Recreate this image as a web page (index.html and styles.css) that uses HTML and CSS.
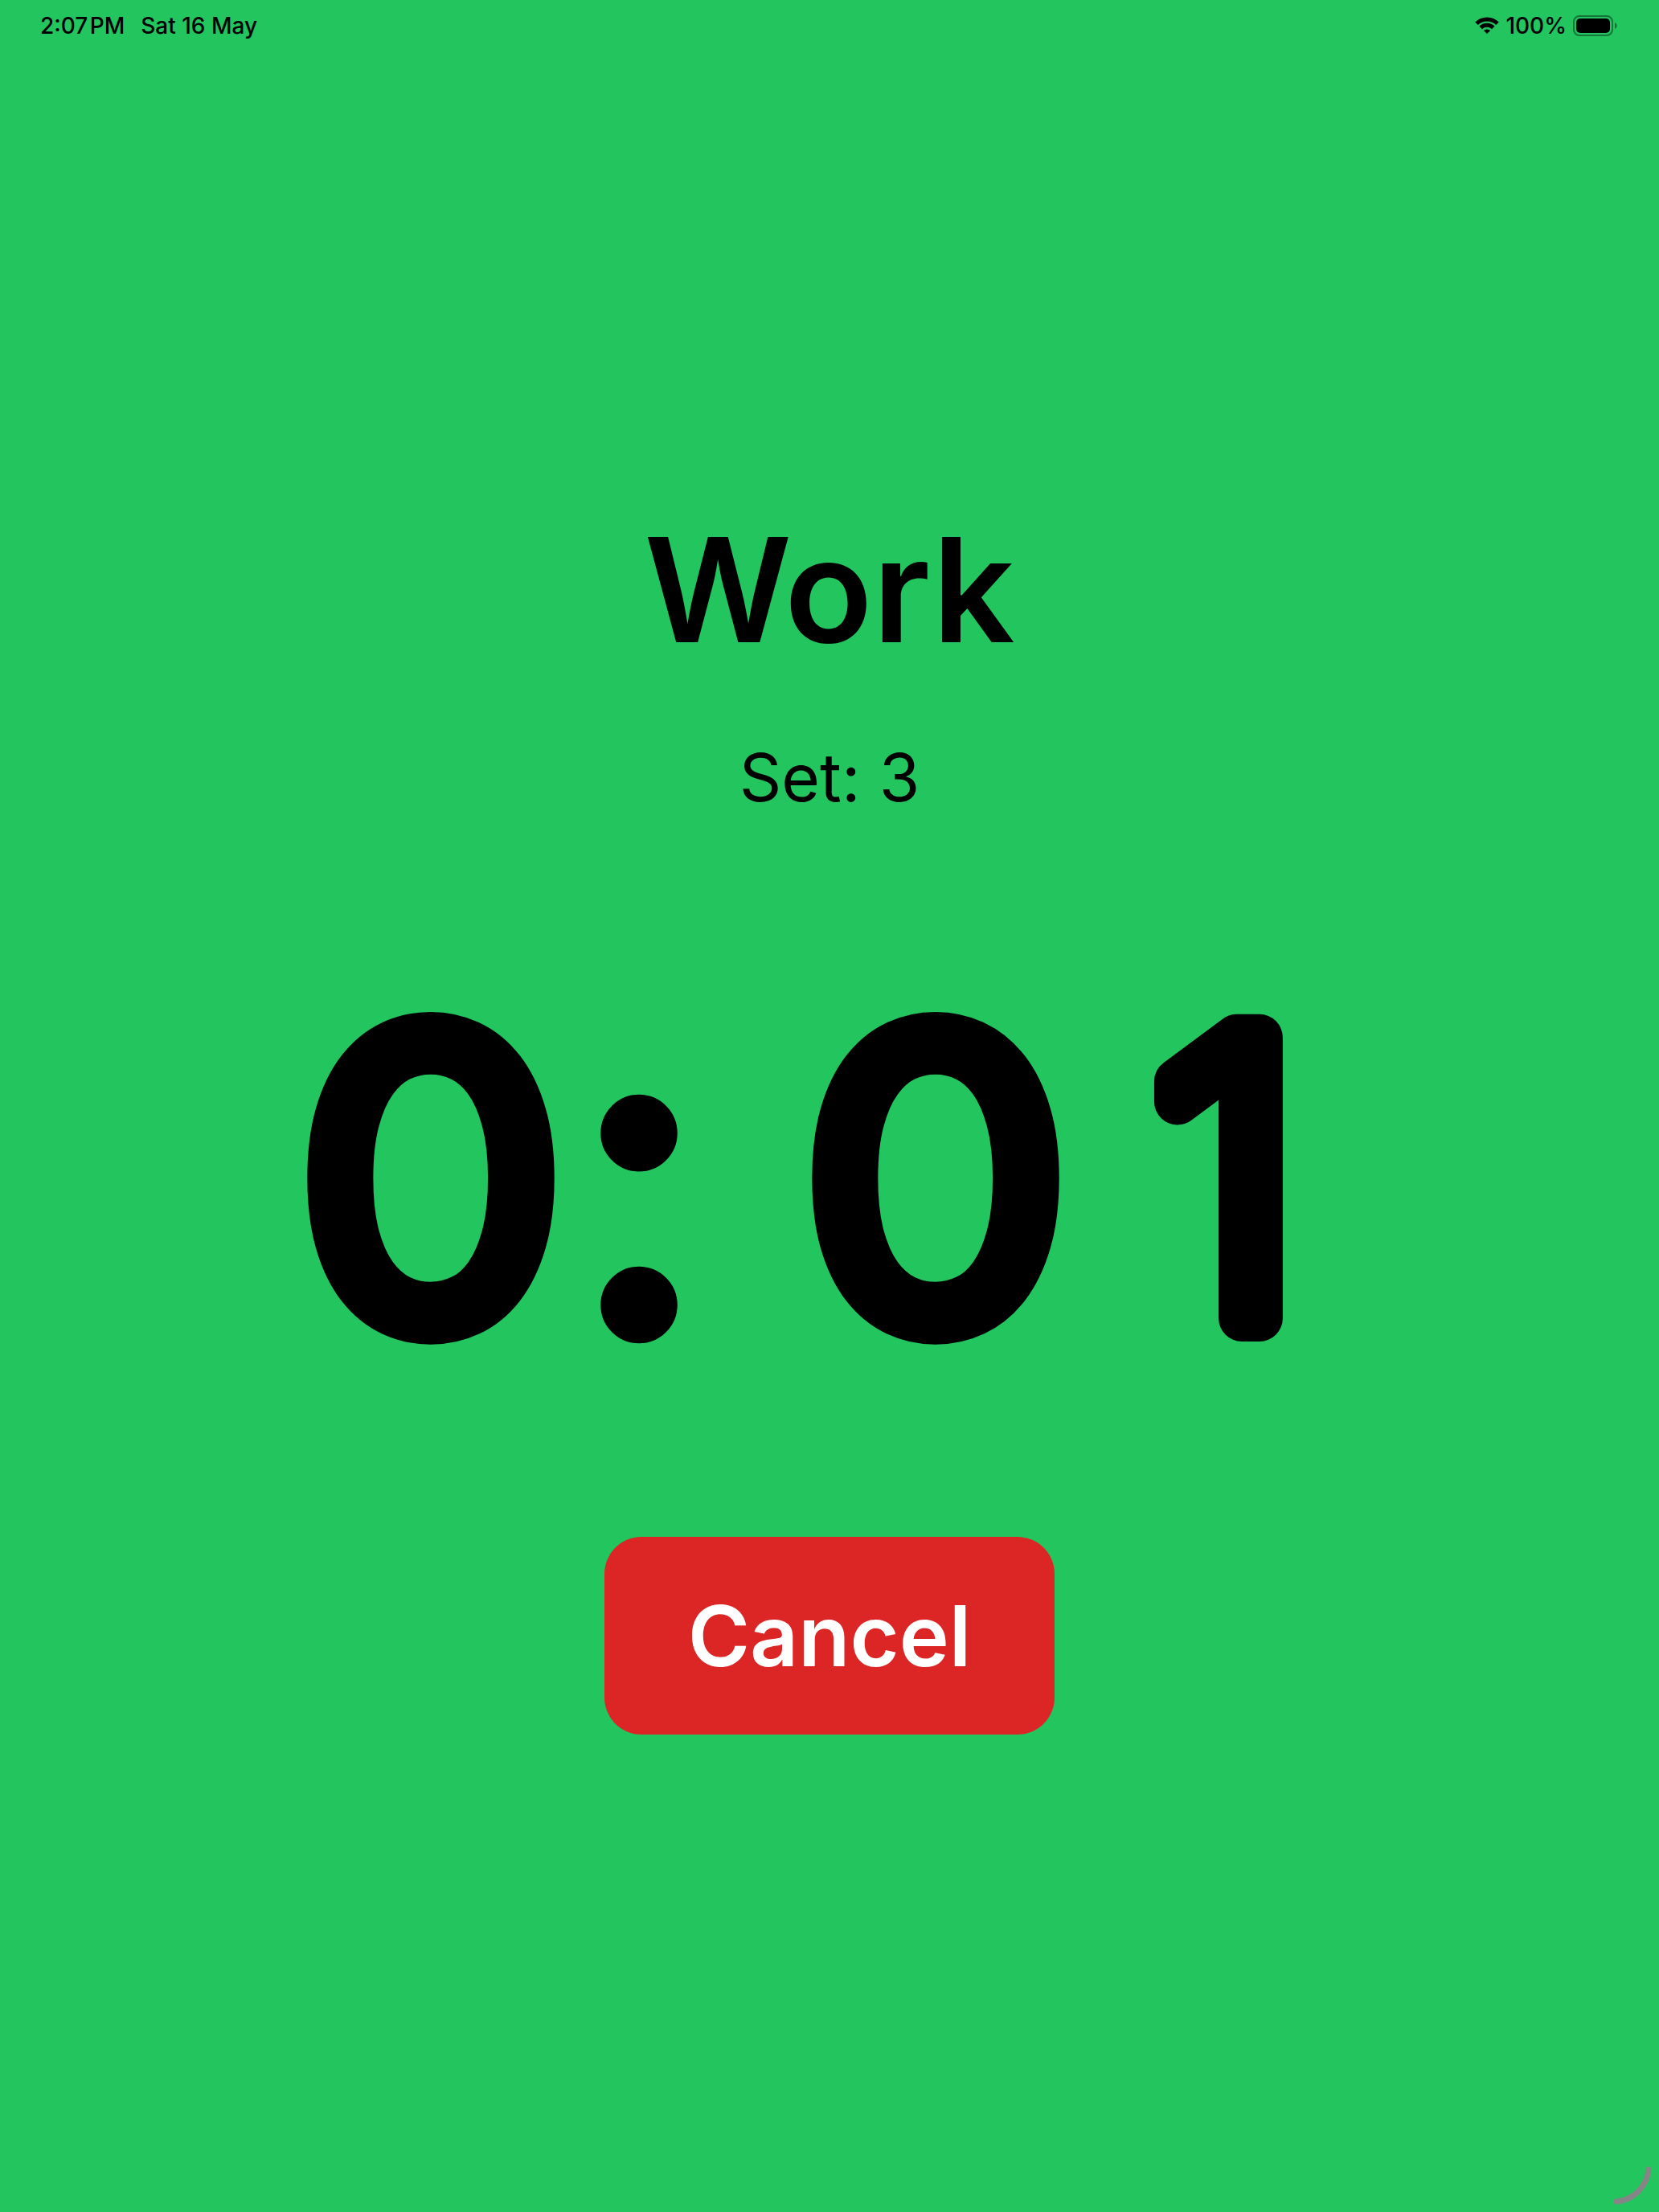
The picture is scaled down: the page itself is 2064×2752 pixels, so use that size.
FILE: index.html
```html
<!DOCTYPE html>
<html lang="en">
<head>
<meta charset="utf-8">
<meta name="viewport" content="width=device-width, initial-scale=1">
<title>Interval Timer</title>
<link rel="stylesheet" href="styles.css">
</head>
<body>
<div class="screen">
  <header class="status">
    <div class="status-left"><span class="clock">2:07&#8202;PM</span><span>Sat 16 May</span></div>
    <div class="status-right">
      <svg class="wifi" viewBox="0 0 30 22" aria-hidden="true">
        <path class="wave" d="M2 8.2A18.6 18.6 0 0 1 28 8.2M7.2 13.4A11.2 11.2 0 0 1 22.8 13.4"/>
        <path d="M15 21L10.9 17A6 6 0 0 1 19.1 17Z"/>
      </svg>
      <span>100%</span>
      <svg class="battery" viewBox="0 0 55 26" aria-hidden="true">
        <rect class="shell" x="1" y="1" width="48" height="24" rx="7"/>
        <rect x="4" y="4" width="42" height="18" rx="5"/>
        <path class="nub" d="M52 9C55.600 10.200 55.600 15.800 52 17Z"/>
      </svg>
    </div>
  </header>
  <main class="workout">
    <h1 class="phase">Work</h1>
    <p class="set">Set: 3</p>
    <svg class="timer" viewBox="0 0 1400 720" role="timer">
      <text class="digits" x="204 463 600 832 1194" y="534"><tspan class="wide">0</tspan>: <tspan class="wide">0</tspan>1</text>
    </svg>
    <button class="cancel" type="button">Cancel</button>
  </main>
  <svg class="corner" viewBox="0 0 60 60" aria-hidden="true"><path d="M47 7A44 44 0 0 1 7 47"/></svg>
</div>
</body>
</html>
```
FILE: styles.css
```css
* { box-sizing: border-box; }

body {
  margin: 0;
  background: #22c55e;
  color: #000;
  font-family: Inter, "Liberation Sans", sans-serif;
}

.screen {
  position: relative;
  display: flex;
  flex-direction: column;
  min-height: 100vh;
}

.status {
  display: flex;
  justify-content: space-between;
  align-items: center;
  height: 64px;
  padding: 0 52px 0 50px;
  font-size: 28px;
  font-weight: 500;
  line-height: 32px;
}

.status-left { display: flex; gap: 20px; }
.status-right { display: flex; align-items: center; gap: 8px; }

.wifi { width: 30px; height: 22px; }
.wave { fill: none; stroke: #000; stroke-width: 5; }
.battery { width: 55px; height: 26px; }
.shell { fill: none; stroke: #000; stroke-opacity: 0.4; stroke-width: 2; }
.nub { fill-opacity: 0.4; }

.workout {
  flex: 1;
  display: flex;
  flex-direction: column;
  align-items: center;
  justify-content: center;
  padding-bottom: 36px;
}

.phase {
  margin: 0;
  font-size: 180px;
  font-weight: 600;
  line-height: 224px;
}

.set {
  margin: 70px 0 0;
  font-size: 82px;
  line-height: 104px;
}

.timer {
  width: 1400px;
  max-width: 100%;
  margin: 86px 0;
}

/* A light face with a thick round outline gives the digits soft ends. */
.digits {
  font-size: 480px;
  font-weight: 200;
  font-feature-settings: "calt" 0;
  text-anchor: middle;
  stroke: #000;
  stroke-width: 58px;
  stroke-linejoin: round;
}

.wide {
  font-family: Lato, Inter, sans-serif;
  font-size: 492px;
  font-weight: 300;
}

.cancel {
  padding: 56px 104px;
  border: 0;
  border-radius: 46px;
  background: #dc2626;
  color: #fff;
  font-family: inherit;
  font-size: 105px;
  font-weight: 600;
  line-height: 134px;
}

.corner {
  position: absolute;
  right: 0;
  bottom: 0;
  width: 60px;
  height: 60px;
  fill: none;
  stroke: #858585;
  stroke-width: 7;
  stroke-linecap: round;
}
```
